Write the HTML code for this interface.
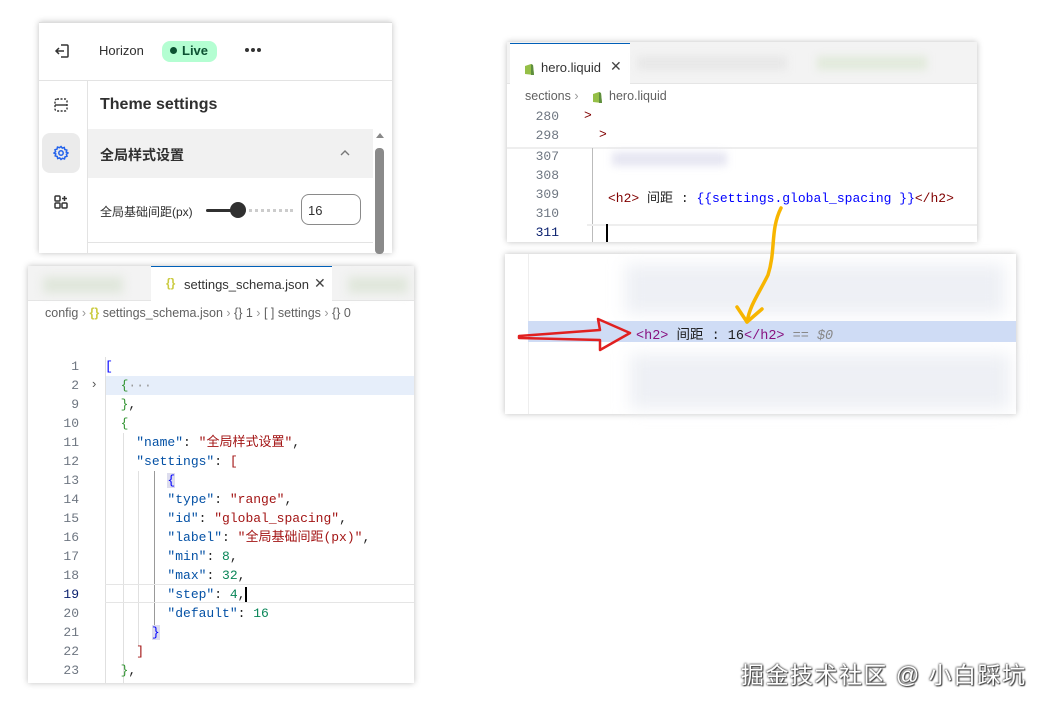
<!DOCTYPE html>
<html><head><meta charset="utf-8"><style>
*{margin:0;padding:0;box-sizing:border-box}
body{width:1047px;height:707px;background:#fff;position:relative;overflow:hidden;font-family:"Liberation Sans","Noto Sans CJK SC",sans-serif;}
.a{position:absolute}
.mono{font-family:"Liberation Mono","Noto Sans CJK SC",monospace;}
.shadow{box-shadow:0 0 6px rgba(0,0,0,.25)}
.ln{position:absolute;width:30px;text-align:right;color:#6e7681;font-size:13px}
.code{position:absolute;font-size:13px;white-space:pre;color:#1f1f1f}
.k{color:#0451a5}.s{color:#a31515}.n{color:#098658}.t{color:#800000}.b{color:#0000ff}
</style></head><body>

<!-- Panel 1 Shopify -->
<div class="a shadow" style="left:39px;top:22px;width:353px;height:231px;background:#fff;border-top:1px solid #ddd">
  <div class="a" style="left:0;top:0;width:353px;height:58px;border-bottom:1px solid #e3e3e3"></div>
  <svg class="a" style="left:14px;top:19px" width="18" height="18" viewBox="0 0 18 18" fill="none" stroke="#333" stroke-width="1.5"><path d="M8 3h6a1 1 0 0 1 1 1v10a1 1 0 0 1-1 1H8"/><path d="M11 9H3M6 6L3 9l3 3"/></svg>
  <div class="a" style="left:60px;top:20px;font-size:13px;color:#303030">Horizon</div>
  <div class="a" style="left:123px;top:18px;width:55px;height:21px;border-radius:8px;background:#b4fed2;color:#0c5132;font-size:13px;font-weight:600;padding:2px 0 0 8px"><span style="display:inline-block;width:7px;height:7px;border-radius:50%;background:#0c5132;margin-right:5px;vertical-align:1px"></span>Live</div>
  <div class="a" style="left:206px;top:25px;width:4px;height:4px;border-radius:50%;background:#333;box-shadow:6px 0 0 #333,12px 0 0 #333"></div>
  <div class="a" style="left:48px;top:58px;width:1px;height:173px;background:#e3e3e3"></div>
  <svg class="a" style="left:14px;top:74px" width="16" height="16" viewBox="0 0 16 16" fill="none" stroke="#333" stroke-width="1.4"><rect x="2" y="2" width="12" height="12" rx="2" stroke-dasharray="2 1.5"/><path d="M2 8h12"/></svg>
  <div class="a" style="left:3px;top:110px;width:38px;height:40px;border-radius:8px;background:#ebebeb"></div>
  <svg class="a" style="left:14px;top:122px" width="16" height="16" viewBox="0 0 16 16" fill="none" stroke="#2463eb" stroke-width="1.5"><circle cx="8" cy="8" r="2.2"/><path d="M8 1.5l1.3 1.6 2-.6.5 2 2 .6-.6 2L15 8l-1.6 1.3.6 2-2 .6-.5 2-2-.6L8 14.5l-1.3-1.6-2 .6-.5-2-2-.6.6-2L1 8l1.6-1.3-.6-2 2-.6.5-2 2 .6z"/></svg>
  <svg class="a" style="left:14px;top:171px" width="16" height="16" viewBox="0 0 16 16" fill="none" stroke="#333" stroke-width="1.5"><rect x="2" y="2" width="5" height="5" rx="1"/><rect x="2" y="9" width="5" height="5" rx="1"/><rect x="9" y="9" width="5" height="5" rx="1"/><path d="M11.5 2v5M9 4.5h5"/></svg>
  <div class="a" style="left:61px;top:73px;font-size:16px;font-weight:bold;color:#303030">Theme settings</div>
  <div class="a" style="left:49px;top:106px;width:285px;height:49px;background:#f1f1f1"></div>
  <div class="a" style="left:61px;top:122px;font-size:14px;font-weight:bold;color:#303030">全局样式设置</div>
  <svg class="a" style="left:300px;top:126px" width="12" height="8" viewBox="0 0 12 8" fill="none" stroke="#777" stroke-width="1.4"><path d="M2 6l4-4 4 4"/></svg>
  <div class="a" style="left:337px;top:110px;width:0;height:0;border-left:4px solid transparent;border-right:4px solid transparent;border-bottom:5px solid #888"></div>
  <div class="a" style="left:336px;top:125px;width:9px;height:106px;border-radius:4px;background:#8a8a8a"></div>
  <div class="a" style="left:61px;top:180px;font-size:12px;color:#303030">全局基础间距(px)</div>
  <div class="a" style="left:167px;top:186px;width:32px;height:3px;background:#303030;border-radius:2px"></div>
  <div class="a" style="left:199px;top:186px;width:55px;height:3px;border-top:3px dotted #ccc"></div>
  <div class="a" style="left:191px;top:179px;width:16px;height:16px;border-radius:50%;background:#303030"></div>
  <div class="a" style="left:262px;top:171px;width:60px;height:31px;border:1px solid #8a8a8a;border-radius:8px;font-size:13px;padding:8px 0 0 6px;color:#303030">16</div>
  <div class="a" style="left:49px;top:219px;width:285px;height:1px;background:#e3e3e3"></div>
</div>

<!-- Panel 2 hero.liquid -->
<div class="a shadow" style="left:507px;top:42px;width:470px;height:200px;background:#fff">
  <div class="a" style="left:0;top:0;width:470px;height:42px;background:#f3f3f3;border-bottom:1px solid #e5e5e5"></div>
  <div class="a" style="left:3px;top:1px;width:120px;height:42px;background:#fff;border-top:1px solid #005fb8"></div>
  <div class="a" style="left:130px;top:14px;width:150px;height:14px;background:#e8e8e8;filter:blur(4px)"></div>
  <div class="a" style="left:310px;top:14px;width:110px;height:14px;background:#e2eadc;filter:blur(4px)"></div>
  <svg class="a" style="left:16px;top:20px" width="12" height="14" viewBox="0 0 12 14"><path d="M2 4l6-2 2 1 1 10-9-1z" fill="#95bf47"/><path d="M8 2l2 1 1 10-3 0z" fill="#5e8e3e"/></svg>
  <div class="a" style="left:34px;top:18px;font-size:13px;color:#333">hero.liquid</div>
  <div class="a" style="left:103px;top:16px;font-size:14px;color:#444">✕</div>
  <div class="a" style="left:18px;top:47px;font-size:12.5px;color:#616161">sections <span style="color:#999">›</span></div>
  <svg class="a" style="left:84px;top:48px" width="12" height="14" viewBox="0 0 12 14"><path d="M2 4l6-2 2 1 1 10-9-1z" fill="#95bf47"/><path d="M8 2l2 1 1 10-3 0z" fill="#5e8e3e"/></svg>
  <div class="a" style="left:102px;top:47px;font-size:12.5px;color:#616161">hero.liquid</div>
  <div class="ln mono" style="left:22px;top:67px">280</div>
  <div class="ln mono" style="left:22px;top:86px">298</div>
  <div class="code mono t" style="left:77px;top:66px">&gt;</div>
  <div class="code mono t" style="left:92px;top:85px">&gt;</div>
  <div class="a" style="left:0;top:105px;width:470px;height:2px;background:#eee"></div>
  <div class="ln mono" style="left:22px;top:107px">307</div>
  <div class="ln mono" style="left:22px;top:126px">308</div>
  <div class="ln mono" style="left:22px;top:145px">309</div>
  <div class="ln mono" style="left:22px;top:164px">310</div>
  <div class="ln mono" style="left:22px;top:183px;color:#0b216f">311</div>
  <div class="a" style="left:85px;top:106px;width:1px;height:94px;background:#bbb"></div>
  <div class="a" style="left:105px;top:110px;width:115px;height:14px;background:#e6e6f2;filter:blur(4px)"></div>
  <div class="code mono" style="left:101px;top:145px"><span class="t">&lt;h2&gt;</span> 间距 : <span class="b">{{settings.global_spacing }}</span><span class="t">&lt;/h2&gt;</span></div>
  <div class="a" style="left:80px;top:182px;width:390px;height:18px;border-top:2px solid #eee"></div>
  <div class="a" style="left:99px;top:182px;width:2px;height:18px;background:#000"></div>
</div>

<!-- Panel 3 devtools -->
<div class="a shadow" style="left:505px;top:254px;width:511px;height:160px;background:#fff">
  <div class="a" style="left:23px;top:0;width:1px;height:160px;background:#eee"></div>
  <div class="a" style="left:120px;top:10px;width:380px;height:50px;background:#eef0f5;filter:blur(8px)"></div>
  <div class="a" style="left:125px;top:100px;width:380px;height:55px;background:#eef0f5;filter:blur(8px)"></div>
  <div class="a" style="left:23px;top:67px;width:488px;height:21px;background:#cfdcf5"></div>
  <div class="code mono" style="left:131px;top:69px;font-size:13.5px"><span style="color:#881280">&lt;h2&gt;</span> 间距 : 16<span style="color:#881280">&lt;/h2&gt;</span> <i style="color:#888">== $0</i></div>
</div>

<!-- arrows -->
<svg class="a" style="left:500px;top:200px" width="300" height="160" viewBox="0 0 300 160" fill="none">
  <path d="M281 8 C270 30 276 50 268 75 C258 95 250 105 247 122" stroke="#f7b500" stroke-width="3.5" stroke-linecap="round"/>
  <path d="M237 107 L247 122 L262 109" stroke="#f7b500" stroke-width="3.5" stroke-linecap="round" stroke-linejoin="round"/>
  <path d="M19 136 L100 130 L98 119 L130 133 L100 150 L100 140 L19 138 Z" stroke="#e02020" stroke-width="2.5" stroke-linejoin="round"/>
</svg>

<!-- Panel 4 JSON -->
<div class="a shadow" style="left:28px;top:266px;width:386px;height:417px;background:#fff">
  <div class="a" style="left:0;top:0;width:386px;height:35px;background:#f3f3f3;border-bottom:1px solid #e5e5e5"></div>
  <div class="a" style="left:15px;top:11px;width:80px;height:16px;background:#dfe6da;filter:blur(5px)"></div>
  <div class="a" style="left:320px;top:11px;width:60px;height:16px;background:#dfe6da;filter:blur(5px)"></div>
  <div class="a" style="left:123px;top:0;width:181px;height:36px;background:#fff;border-top:1px solid #005fb8"></div>
  <div class="a" style="left:138px;top:10px;font-size:12px;color:#cbcb41;font-weight:bold">{}</div>
  <div class="a" style="left:156px;top:11px;font-size:13px;color:#333">settings_schema.json</div>
  <div class="a" style="left:286px;top:9px;font-size:14px;color:#444">✕</div>
  <div class="a" style="left:17px;top:40px;font-size:12.5px;color:#616161;white-space:pre">config <span style="color:#999">›</span> <span style="color:#cbcb41;font-weight:bold">{}</span> settings_schema.json <span style="color:#999">›</span> {} 1 <span style="color:#999">›</span> [ ] settings <span style="color:#999">›</span> {} 0</div>
  <div class="a" style="left:77px;top:110px;width:309px;height:19px;background:#e6eefa"></div>
  <div class="a" style="left:77px;top:91px;width:1px;height:326px;background:#e0e0e0"></div>
  <div class="a" style="left:95px;top:167px;width:1px;height:250px;background:#e0e0e0"></div>
  <div class="a" style="left:110px;top:205px;width:1px;height:175px;background:#e0e0e0"></div>
  <div class="a" style="left:126px;top:205px;width:1px;height:155px;background:#999"></div>
  <div class="a" style="left:77px;top:318px;width:309px;height:19px;border-top:1px solid #e5e5e5;border-bottom:1px solid #e5e5e5"></div>
  <div class="a" style="left:64px;top:110px;font-size:13px;color:#555">›</div>
  <div class="mono" style="position:absolute;left:0;top:91px;font-size:13px;line-height:19px">
    <div class="ln" style="position:static;width:51px;line-height:19px">1<br>2<br>9<br>10<br>11<br>12<br>13<br>14<br>15<br>16<br>17<br>18<br><span style="color:#0b216f">19</span><br>20<br>21<br>22<br>23</div>
  </div>
  <div class="code mono" style="left:77px;top:91px;line-height:19px"><span class="b">[</span>
  <span style="color:#319331">{</span><span style="color:#999">···</span>
  <span style="color:#319331">}</span>,
  <span style="color:#319331">{</span>
    <span class="k">"name"</span>: <span class="s">"全局样式设置"</span>,
    <span class="k">"settings"</span>: <span class="s">[</span>
        <span class="b" style="background:#dde">{</span>
        <span class="k">"type"</span>: <span class="s">"range"</span>,
        <span class="k">"id"</span>: <span class="s">"global_spacing"</span>,
        <span class="k">"label"</span>: <span class="s">"全局基础间距(px)"</span>,
        <span class="k">"min"</span>: <span class="n">8</span>,
        <span class="k">"max"</span>: <span class="n">32</span>,
        <span class="k">"step"</span>: <span class="n">4</span>,<span style="border-left:2px solid #000"></span>
        <span class="k">"default"</span>: <span class="n">16</span>
      <span class="b" style="background:#dde">}</span>
    <span class="s">]</span>
  <span style="color:#319331">}</span>,</div>
</div>

<!-- watermark -->
<div class="a" style="left:741px;top:656px;font-size:23px;letter-spacing:1.5px;color:#fff;text-shadow:0 0 2px #444,0 0 2px #444,1px 1px 1px #444;white-space:nowrap">掘金技术社区 @ 小白踩坑</div>
</body></html>
